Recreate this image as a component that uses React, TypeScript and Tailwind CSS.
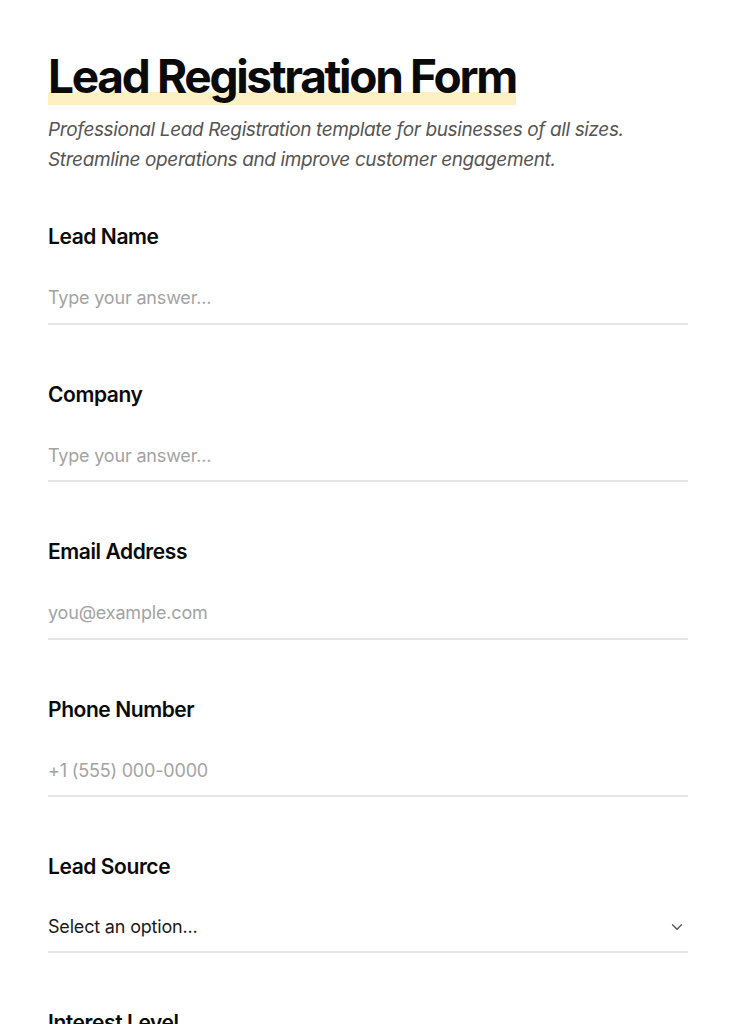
import { ChevronDown } from 'lucide-react';

const fields = [
    { label: 'Lead Name', placeholder: 'Type your answer...' },
    { label: 'Company', placeholder: 'Type your answer...' },
    { label: 'Email Address', placeholder: 'you@example.com' },
    { label: 'Phone Number', placeholder: '+1 (555) 000-0000' },
];

const font = { fontFamily: 'Inter, "Noto Sans", sans-serif' };

export default function App() {
    return (
        <div className="min-h-screen bg-white text-black" style={font}>
            <div className="px-12 pt-[48px]">
                <h1 className="inline-block text-[46px] font-bold leading-[57px] tracking-[-0.05em] text-[#0a0a0a] [background:linear-gradient(transparent_77%,#fdf0c3_77%)]">
                    Lead Registration Form
                </h1>
                <p className="mt-[10px] text-[19px] italic leading-[30px] text-[#555555] tracking-[-0.02em]">
                    Professional Lead Registration template for businesses of all sizes.
                    <br />
                    Streamline operations and improve customer engagement.
                </p>

                <div className="mt-[48px] flex flex-col gap-[56px]">
                    {fields.map((f) => (
                        <div key={f.label}>
                            <label className="block text-[21px] font-semibold leading-[28px] tracking-[-0.02em] text-[#0a0a0a]">
                                {f.label}
                            </label>
                            <input
                                className="mt-[30px] block w-full border-b-2 border-[#e6e6e6] pb-[11.5px] pt-[4px] text-[18px] leading-[26px] outline-none placeholder:text-[#a3a3a3] tracking-[-0.01em]"
                                placeholder={f.placeholder}
                            />
                        </div>
                    ))}
                    <div>
                        <label className="block text-[21px] font-semibold leading-[28px] tracking-[-0.02em] text-[#0a0a0a]">
                            Lead Source
                        </label>
                        <div className="mt-[29px] flex items-center justify-between border-b-2 border-[#e6e6e6] pb-[11px] pt-[4px]">
                            <span className="text-[18px] leading-[26px] text-[#1a1a1a] tracking-[-0.01em]">Select an option...</span>
                            <ChevronDown className="mr-[2px] h-[18px] w-[18px] text-[#555555]" strokeWidth={1.75} />
                        </div>
                    </div>
                    <div>
                        <label className="block text-[21px] font-semibold leading-[28px] tracking-[-0.02em] text-[#0a0a0a]">
                            Interest Level
                        </label>
                    </div>
                </div>
            </div>
        </div>
    );
}
